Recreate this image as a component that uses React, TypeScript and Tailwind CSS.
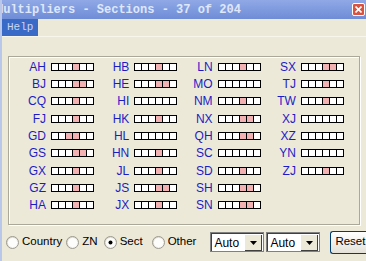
import React from "react";

type Entry = [string, number[]];

const columns: Entry[][] = [
  [
    ["AH", [3]],
    ["BJ", [3, 4]],
    ["CQ", [3]],
    ["FJ", [3]],
    ["GD", [2, 3]],
    ["GS", [3, 4]],
    ["GX", [3]],
    ["GZ", [3]],
    ["HA", [3]],
  ],
  [
    ["HB", [3]],
    ["HE", [3, 4]],
    ["HI", []],
    ["HK", [3]],
    ["HL", []],
    ["HN", [3]],
    ["JL", [3]],
    ["JS", [3, 4]],
    ["JX", [3]],
  ],
  [
    ["LN", [3]],
    ["MO", []],
    ["NM", [3]],
    ["NX", [3, 4]],
    ["QH", [3, 4]],
    ["SC", []],
    ["SD", [3]],
    ["SH", [3, 4]],
    ["SN", [3, 4]],
  ],
  [
    ["SX", [3, 4]],
    ["TJ", [3]],
    ["TW", [3]],
    ["XJ", []],
    ["XZ", []],
    ["YN", []],
    ["ZJ", [3]],
  ],
];

function Strip({ on }: { on: number[] }) {
  return (
    <div className="flex h-[8px] border-l border-black">
      {[0, 1, 2, 3, 4, 5].map((i) => (
        <div
          key={i}
          className={
            "w-[7px] h-[8px] border-y border-r border-black " +
            (on.includes(i) ? "bg-[#f2b2b4]" : "bg-white")
          }
        />
      ))}
    </div>
  );
}

function Radio({ checked, label }: { checked?: boolean; label: string }) {
  return (
    <div className="flex items-center">
      <svg width="13" height="13" viewBox="0 0 13 13">
        <defs>
          <linearGradient id="rg" x1="0" y1="0" x2="1" y2="1">
            <stop offset="0" stopColor="#d6d4ca" />
            <stop offset="1" stopColor="#ffffff" />
          </linearGradient>
        </defs>
        <circle cx="6.5" cy="6.5" r="6" fill="url(#rg)" stroke="#9c9a8e" strokeWidth="1" />
        <circle cx="6.5" cy="6.5" r="4.6" fill="#fdfdfb" />
        {checked && <circle cx="6.5" cy="6.5" r="2" fill="#000" />}
      </svg>
      <span className="ml-[3px] text-[11.5px] text-black leading-none">{label}</span>
    </div>
  );
}

function Select({ w }: { w: string }) {
  return (
    <div
      className={
        w +
        " h-[20px] flex items-center bg-white border border-[#808080] shadow-[inset_1px_1px_0_#404040] pl-[3px] pr-[2px]"
      }
    >
      <span className="flex-1 text-[12px] text-black leading-none pt-[1px]">Auto</span>
      <div className="w-[17px] h-[16px] bg-[#ece9d8] border-t border-l border-white shadow-[1px_1px_0_#404040] flex items-center justify-center">
        <svg width="7" height="4" viewBox="0 0 7 4">
          <path d="M0 0h7L3.5 4z" fill="#000" />
        </svg>
      </div>
    </div>
  );
}

export default function App() {
  return (
    <div className="w-[366px] h-[261px] overflow-hidden bg-[#ece9d8] font-['Liberation_Sans',Arial,sans-serif] border-l-2 border-[#b9c7ea]">
      {/* title bar */}
      <div className="h-[19px] flex items-center bg-gradient-to-b from-[#90a9e6] to-[#6f8cd7]">
        <span className="ml-[-6px] font-['Liberation_Mono',monospace] font-bold text-[12px] text-[#dfe7fa] whitespace-nowrap leading-none">
          Multipliers - Sections - 37 of 204
        </span>
        <div className="ml-auto mr-[1px] w-[13px] h-[13px] rounded-[2px] border border-white bg-[#d9533f] flex items-center justify-center">
          <svg width="7" height="7" viewBox="0 0 7 7">
            <path d="M0.5 0.5L6.5 6.5M6.5 0.5L0.5 6.5" stroke="#fff" strokeWidth="1.6" />
          </svg>
        </div>
      </div>
      {/* menu */}
      <div className="h-[18px] flex bg-[#ece9d8] border-b border-[#f7f5ec]">
        <div className="bg-[#3a6ac7] px-[5px] flex items-center font-['Liberation_Mono',monospace] text-[11px] text-[#c9d6f2]">
          Help
        </div>
      </div>
      {/* frame */}
      <div className="mt-[19px] ml-[6px] w-[352px] h-[169px] border border-[#aca899] shadow-[inset_1px_1px_0_#fff,1px_1px_0_#fff] pt-[1px] pl-[2px] flex">
        {columns.map((col, ci) => (
          <div key={ci} className="w-[83.3px] flex flex-col">
            {col.map(([name, on]) => (
              <div key={name} className="h-[17.33px] flex items-center">
                <span className="w-[37px] pr-[2px] text-right text-[12px] leading-none text-[#1c1cc6]">
                  {name}
                </span>
                <div className="ml-[3px]">
                  <Strip on={on} />
                </div>
              </div>
            ))}
          </div>
        ))}
      </div>
      {/* bottom controls */}
      <div className="mt-[5px] flex items-center pl-[4px] h-[24px]">
        <Radio label="Country" />
        <div className="ml-[4px]">
          <Radio label="ZN" />
        </div>
        <div className="ml-[6px]">
          <Radio checked label="Sect" />
        </div>
        <div className="ml-[9px]">
          <Radio label="Other" />
        </div>
        <div className="ml-[14px] flex gap-[2px]">
          <Select w="w-[54px]" />
          <Select w="w-[54px]" />
        </div>
        <div className="ml-[10px] h-[23px] w-[40px] shrink-0 rounded-l-[3px] border border-r-0 border-[#003c74] bg-gradient-to-b from-[#ffffff] to-[#e3e1d8] flex items-center pl-[4px] text-[11.5px] leading-none text-black whitespace-nowrap">
          Reset
        </div>
      </div>
    </div>
  );
}
